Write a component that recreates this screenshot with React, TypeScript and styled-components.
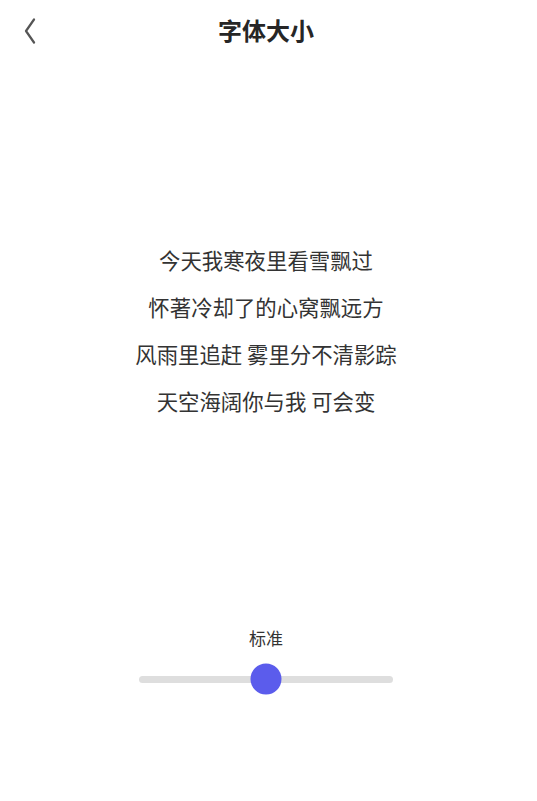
import React, { useState } from 'react';
import styled, { createGlobalStyle } from 'styled-components';

const GlobalStyle = createGlobalStyle`
  html, body {
    margin: 0;
    padding: 0;
    background: #ffffff;
  }
  body {
    font-family: "Noto Sans CJK SC", "Noto Sans", sans-serif;
    color: #333;
  }
`;

const Page = styled.div`
  height: 801px;
  padding-right: 5px;
  display: flex;
  flex-direction: column;
  background: #fff;
`;

const Header = styled.header`
  height: 64px;
  display: grid;
  grid-template-columns: 64px 1fr 64px;
  align-items: center;
`;

const BackButton = styled.button`
  border: none;
  background: none;
  padding: 0 0 2px 24px;
  height: 64px;
  display: flex;
  align-items: center;
  cursor: pointer;
  color: #555;
`;

const Title = styled.h1`
  margin: 0 0 5px;
  text-align: center;
  font-size: 24px;
  font-weight: 700;
  color: #262626;
`;

const Preview = styled.section`
  margin-top: 172px;
  display: flex;
  flex-direction: column;
  align-items: center;
`;

const Line = styled.p<{ size: number }>`
  margin: 0;
  font-size: ${p => p.size}px;
  line-height: 47px;
  color: #333;
  white-space: pre;
`;

const Controls = styled.section`
  margin-top: auto;
  padding-bottom: 105px;
  display: flex;
  flex-direction: column;
  align-items: center;
`;

const Label = styled.div`
  font-size: 17px;
  line-height: 24px;
  color: #333;
`;

const SliderBox = styled.div`
  position: relative;
  margin-top: 12px;
  width: 254px;
  height: 34px;
  display: flex;
  align-items: center;
`;

const Track = styled.div`
  width: 100%;
  height: 7px;
  border-radius: 4px;
  background: #dedede;
`;

const Thumb = styled.div`
  position: absolute;
  top: 50%;
  width: 31px;
  height: 31px;
  border-radius: 50%;
  background: #5b5cec;
  transform: translate(-50%, -50%);
`;

const sizes = ['较小', '小', '标准', '大', '较大'];
const fontSizes = [15, 18, 21.4, 24, 27];

const lyrics = [
  '今天我寒夜里看雪飘过',
  '怀著冷却了的心窝飘远方',
  '风雨里追赶 雾里分不清影踪',
  '天空海阔你与我 可会变',
];

export default function App(): React.ReactElement {
  const [level] = useState(2);
  const pct = (level / (sizes.length - 1)) * 100;

  return (
    <Page>
      <GlobalStyle />
      <Header>
        <BackButton aria-label="返回">
          <svg width="12" height="26" viewBox="0 0 12 26" fill="none">
            <path d="M10 1.5 L2 13 L10 24.5" stroke="#555" strokeWidth="2.2" strokeLinecap="round" strokeLinejoin="round" />
          </svg>
        </BackButton>
        <Title>字体大小</Title>
        <div />
      </Header>
      <Preview>
        {lyrics.map(l => (
          <Line key={l} size={fontSizes[level]}>{l}</Line>
        ))}
      </Preview>
      <Controls>
        <Label>{sizes[level]}</Label>
        <SliderBox>
          <Track />
          <Thumb style={{ left: `${pct}%` }} />
        </SliderBox>
      </Controls>
    </Page>
  );
}
